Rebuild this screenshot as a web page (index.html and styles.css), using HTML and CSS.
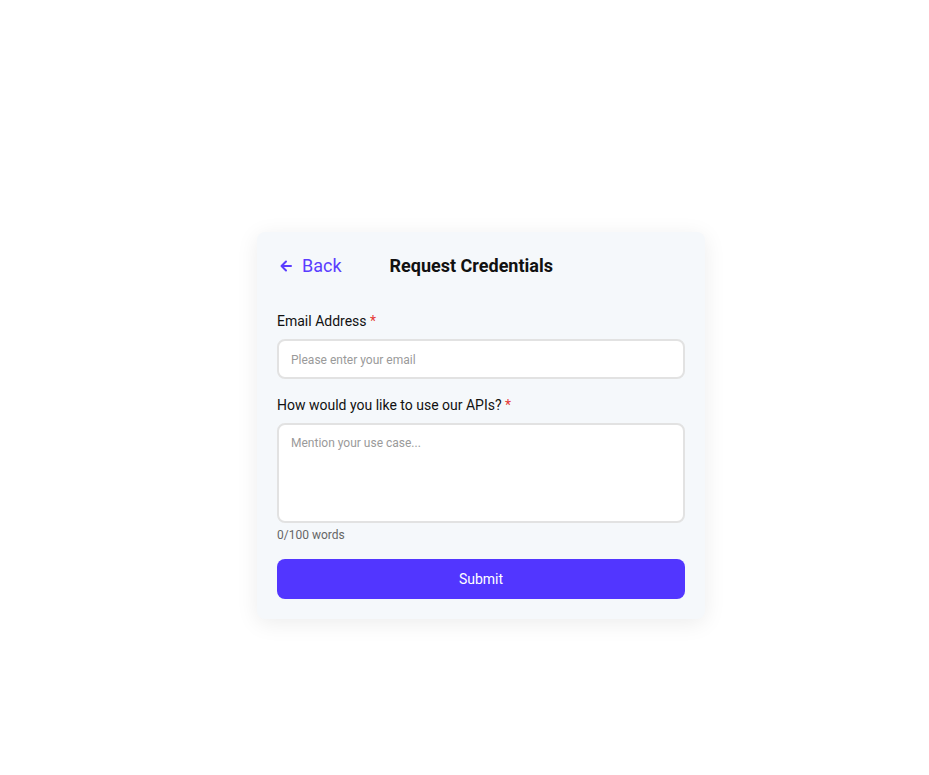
FILE: index.html
```html
<!DOCTYPE html>
<html>
<head>
<meta charset="utf-8">
<link rel="stylesheet" href="styles.css">
</head>
<body>
<div class="page">
  <div class="card">
    <div class="header">
      <a class="back" href="#">
        <svg width="16" height="16" viewBox="0 0 16 16" fill="none" stroke="#5a3dff" stroke-width="2" stroke-linecap="round" stroke-linejoin="round"><path d="M13 8H3.5M8 3.5L3.5 8 8 12.5"/></svg>
        <span>Back</span>
      </a>
      <h1 class="title">Request Credentials</h1>
    </div>
    <label class="label">Email Address <span class="req">*</span></label>
    <input class="input" type="text" placeholder="Please enter your email">
    <label class="label label-2">How would you like to use our APIs? <span class="req">*</span></label>
    <textarea class="textarea" placeholder="Mention your use case..."></textarea>
    <div class="count">0/100 words</div>
    <button class="submit">Submit</button>
  </div>
</div>
</body>
</html>
```
FILE: styles.css
```css
* { box-sizing: border-box; }
body { margin: 0; background: #fff; font-family: Roboto, "Liberation Sans", sans-serif; }
.page {
  min-height: 775px;
  display: flex;
  justify-content: center;
  align-items: center;
  padding: 75px 0 0 33px;
}
.card {
  width: 448px;
  background: #f5f8fb;
  border-radius: 8px;
  padding: 20px;
  box-shadow: 0 4px 22px rgba(0,0,0,0.08);
  display: flex;
  flex-direction: column;
}
.header {
  height: 28px;
  display: flex;
  align-items: center;
  margin-bottom: 31px;
}
.back {
  display: flex;
  align-items: center;
  gap: 8px;
  color: #5a3dff;
  text-decoration: none;
  font-size: 18px;
  padding-left: 1px;
}
.title {
  margin: 0 0 0 48px;
  font-size: 18px;
  font-weight: 700;
  color: #111;
}
.label {
  display: block;
  font-size: 14px;
  line-height: 20px;
  color: #111;
  margin-bottom: 8px;
}
.label-2 { margin-top: 16px; }
.req { color: #e53935; }
.input, .textarea {
  width: 100%;
  border: 2px solid #e2e2e2;
  border-radius: 8px;
  background: #fff;
  font-family: Roboto, "Liberation Sans", sans-serif;
  font-size: 12px;
  padding: 0 12px;
  outline: none;
}
.input { height: 40px; padding-top: 2px; }
.textarea { height: 100px; padding-top: 11px; resize: none; display: block; }
.input::placeholder, .textarea::placeholder { color: #9a9a9a; }
.count {
  font-size: 12px;
  line-height: 16px;
  color: #666;
  margin-top: 4px;
}
.submit {
  margin-top: 16px;
  height: 40px;
  border: none;
  border-radius: 8px;
  background: #5236ff;
  color: #fff;
  font-family: Roboto, "Liberation Sans", sans-serif;
  font-size: 14px;
}
```
